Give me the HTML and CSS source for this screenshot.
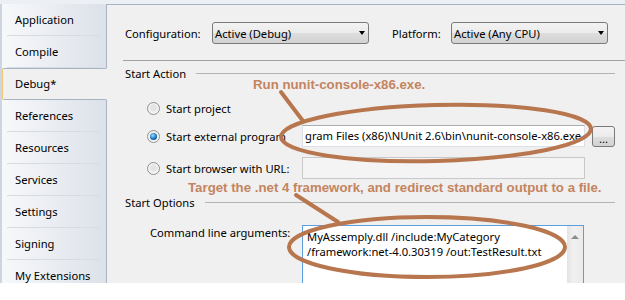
FILE: index.html
```html
<!DOCTYPE html>
<html lang="en">
<head>
    <meta charset="UTF-8">
    <title>Project Properties - Debug</title>
    <link rel="stylesheet" href="styles.css">
</head>
<body>

    <div class="window">
        <!-- Property page tabs -->
        <ul class="tabs">
            <li class="tab">Application</li>
            <li class="tab">Compile</li>
            <li class="tab active">Debug*</li>
            <li class="tab">References</li>
            <li class="tab">Resources</li>
            <li class="tab">Services</li>
            <li class="tab">Settings</li>
            <li class="tab">Signing</li>
            <li class="tab">My Extensions</li>
        </ul>

        <div class="panel">
            <div class="config-row">
                <span class="config-label">Configuration:</span>
                <div class="combo"><span>Active (Debug)</span><span class="combo-arrow"></span></div>
                <span class="config-label platform">Platform:</span>
                <div class="combo"><span>Active (Any CPU)</span><span class="combo-arrow"></span></div>
            </div>

            <hr class="separator">

            <div class="group-title">Start Action</div>
            <div class="note note-run">Run nunit-console-x86.exe.</div>

            <div class="option-row first">
                <span class="option"><span class="radio"></span>Start project</span>
            </div>
            <div class="option-row">
                <span class="option"><span class="radio checked"></span>Start external program</span>
                <div class="textbox">gram Files (x86)\NUnit 2.6\bin\nunit-console-x86.exe</div>
                <button class="browse">...</button>
            </div>
            <div class="option-row url">
                <span class="option"><span class="radio"></span>Start browser with URL:</span>
                <div class="textbox disabled"></div>
            </div>

            <div class="note note-target">Target the .net 4 framework, and redirect standard output to a file.</div>
            <div class="group-title options">Start Options</div>

            <div class="args-row">
                <span class="args-label">Command line arguments:</span>
                <div class="textarea">
                    <div class="args-text">MyAssemply.dll /include:MyCategory<br>/framework:net-4.0.30319 /out:TestResult.txt</div>
                    <div class="scrollbar"><span class="scroll-up"></span></div>
                </div>
            </div>
        </div>

        <!-- hand drawn markup on top of the screenshot -->
        <svg class="markup" width="625" height="283" viewBox="0 0 625 283">
            <ellipse cx="436" cy="133" rx="155" ry="28" transform="rotate(-1.5 436 133)"/>
            <line x1="281" y1="92" x2="303" y2="121"/>
            <ellipse cx="427" cy="247" rx="138" ry="30"/>
            <line x1="296" y1="195" x2="338" y2="222"/>
        </svg>
    </div>

</body>
</html>
```

FILE: styles.css
```css
body {
    margin: 0;
    background: #fff;
    font-family: "Noto Sans", "Liberation Sans", sans-serif;
    font-size: 11.2px;
    color: #000;
}
.window {
    position: relative;
    display: flex;
    width: 625px;
    height: 283px;
    padding-top: 4px;
    box-sizing: border-box;
    background: #eceff3;
    overflow: hidden;
}

/* tabs */
.tabs {
    list-style: none;
    margin: 0;
    padding: 0;
    width: 107px;
    flex-shrink: 0;
    border-left: 2px solid #cdd5e0;
    box-sizing: border-box;
    background: linear-gradient(to right, #f7f8fa, #dce1e9);
}
.tab {
    height: 32px;
    line-height: 32px;
    padding-left: 13px;
    border-right: 1px solid #a9b4c3;
    box-sizing: border-box;
    background: linear-gradient(#d6dce4, #d6dce4) no-repeat 5px 31px / 93px 1px;
}
.tab.active {
    line-height: 30px;
    padding-left: 12px;
    background: #f0f0f0;
    border: 1px solid #a9b4c3;
    border-left-color: #f2c878;
    border-right-color: #f0f0f0;
    border-radius: 2px 0 0 2px;
}

/* main page */
.panel {
    flex: 1;
    background: #f0f0f0;
    border-top: 1px solid #a9b4c3;
}
.config-row {
    display: flex;
    align-items: center;
    height: 22px;
    margin-top: 17px;
    padding-left: 18px;
}
.config-label {
    width: 87px;
}
.config-label.platform {
    width: 59px;
    margin-left: 23px;
}
.combo {
    display: flex;
    align-items: center;
    justify-content: space-between;
    width: 157px;
    height: 22px;
    padding: 0 3px 0 2px;
    box-sizing: border-box;
    border: 1px solid #7a7a7a;
    border-radius: 3px;
    background: linear-gradient(#f3f3f3, #ebebeb 50%, #dedede 50%, #d2d2d2);
}
.combo-arrow {
    width: 0;
    height: 0;
    border-left: 3.5px solid transparent;
    border-right: 3.5px solid transparent;
    border-top: 4px solid #000;
}
.separator {
    margin: 16px 0 0 16px;
    height: 0;
    border: 0;
    border-top: 1px solid #a0a0a0;
}
.group-title {
    display: flex;
    align-items: center;
    height: 11px;
    margin: 7px 10px 0 18px;
}
.group-title::after {
    content: "";
    flex: 1;
    margin-left: 10px;
    border-top: 1px solid #b4b4b4;
}
.group-title.options {
    margin-top: 3px;
}
.note {
    font-family: "Liberation Sans", Arial, sans-serif;
    font-weight: bold;
    font-size: 13.25px;
    line-height: 12px;
    height: 12px;
    color: #c4845f;
    white-space: nowrap;
}
.note-run {
    padding-left: 146px;
}
.note-target {
    margin-top: 3px;
    padding-left: 81px;
}
.option-row {
    display: flex;
    align-items: center;
    height: 22px;
    margin-top: 6px;
    padding-left: 40px;
}
.option-row.url {
    margin-top: 10px;
}
.option {
    display: flex;
    align-items: center;
    width: 155px;
    white-space: nowrap;
}
.radio {
    display: flex;
    align-items: center;
    justify-content: center;
    width: 13px;
    height: 13px;
    margin-right: 6px;
    box-sizing: border-box;
    border: 1px solid #8e8f8f;
    border-radius: 50%;
    background: radial-gradient(circle at 50% 45%, #e4e4e4 30%, #f8f8f8 70%);
}
.radio.checked::after {
    content: "";
    width: 7px;
    height: 7px;
    border-radius: 50%;
    background: radial-gradient(circle at 40% 35%, #9edcff, #1774bd 55%, #0b3f7a);
}
.textbox {
    width: 283px;
    height: 22px;
    padding-left: 2px;
    box-sizing: border-box;
    border: 1px solid #dbdfe6;
    border-top-color: #abadb3;
    background: #fff;
    line-height: 20px;
    white-space: nowrap;
    overflow: hidden;
}
.textbox.disabled {
    background: #f4f4f4;
    border-color: #c8c8c8;
}
.browse {
    width: 23px;
    height: 21px;
    margin-left: 7px;
    padding: 0;
    font: inherit;
    line-height: 24px;
    border: 1px solid #7a7a7a;
    border-radius: 3px;
    background: linear-gradient(#f3f3f3, #ebebeb 50%, #dedede 50%, #d2d2d2);
}
.args-row {
    display: flex;
    align-items: flex-start;
    margin-top: 17px;
    padding-left: 43px;
}
.args-label {
    width: 152px;
    line-height: 15px;
    white-space: nowrap;
}
.textarea {
    display: flex;
    width: 282px;
    height: 70px;
    box-sizing: border-box;
    border: 1px solid #5c9fe0;
    border-bottom: 0;
    background: #fff;
}
.args-text {
    flex: 1;
    padding: 3px 0 0 4px;
    line-height: 15px;
    white-space: nowrap;
}
.scrollbar {
    display: flex;
    justify-content: center;
    width: 16px;
    padding-top: 9px;
    box-sizing: border-box;
    background: linear-gradient(to right, #e3e3e3, #f0f0f0 40%, #ebebeb);
}
.scroll-up {
    width: 0;
    height: 0;
    border-left: 4px solid transparent;
    border-right: 4px solid transparent;
    border-bottom: 4px solid #8c8c8c;
}

/* red-pen annotations */
.markup {
    position: absolute;
    left: 0;
    top: 0;
    pointer-events: none;
    fill: none;
    stroke: #b8764f;
    stroke-width: 4;
    stroke-linecap: round;
}
```
